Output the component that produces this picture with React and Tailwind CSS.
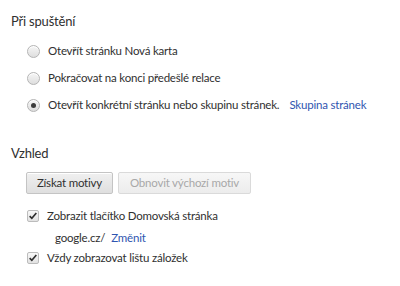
import { useState } from "react";

const font = { fontFamily: 'Lato, "Noto Sans", sans-serif' };

function Radio({ checked }) {
  return (
    <span className="relative inline-block h-[13px] w-[13px] shrink-0 rounded-full border border-[#b4b4b4] bg-gradient-to-b from-[#f6f6f6] to-[#dedede] shadow-[inset_0_1px_0_#fff]">
      {checked && (
        <span className="absolute left-[3px] top-[3px] h-[5px] w-[5px] rounded-full bg-[#3c3c3c]" />
      )}
    </span>
  );
}

function Checkbox() {
  return (
    <span className="flex h-[12px] w-[12px] shrink-0 items-center justify-center rounded-[2px] border border-[#bcbcbc] bg-gradient-to-b from-[#f8f8f8] to-[#e2e2e2]">
      <svg viewBox="0 0 12 12" className="h-[10px] w-[10px]">
        <path d="M2 6.2 L4.6 8.8 L10 2.4" fill="none" stroke="#2e2e2e" strokeWidth="2" />
      </svg>
    </span>
  );
}

export default function App() {
  const [startup] = useState(2);
  const options = [
    "Otevřít stránku Nová karta",
    "Pokračovat na konci předešlé relace",
    "Otevřít konkrétní stránku nebo skupinu stránek.",
  ];

  return (
    <div
      className="h-[286px] w-[400px] whitespace-nowrap bg-white text-[11.5px] tracking-[-0.2px] text-[#303030]"
      style={font}
    >
      <div className="pl-[11px] pt-[12px]">
        <h3 className="text-[13px] leading-[18px]">Při spuštění</h3>
        <div className="mt-[13px] flex flex-col gap-[11px] pl-[16px]">
          {options.map((label, i) => (
            <label key={label} className="flex h-[16px] items-center gap-[8px]">
              <Radio checked={startup === i} />
              <span>{label}</span>
              {i === 2 && <a className="ml-[2px] text-[#2f55b0]">Skupina stránek</a>}
            </label>
          ))}
        </div>

        <h3 className="mt-[31px] text-[13px] leading-[18px]">Vzhled</h3>
        <div className="mt-[10px] flex gap-[5px] pl-[15px]">
          <button className="h-[22px] w-[87px] rounded-[2px] border border-[#c4c4c4] bg-gradient-to-b from-[#f0f0f0] to-[#dfdfdf] text-[11.5px] text-[#303030] shadow-[inset_0_1px_0_#fff]">
            Získat motivy
          </button>
          <button
            disabled
            className="h-[22px] w-[133px] rounded-[2px] border border-[#dadada] bg-gradient-to-b from-[#f7f7f7] to-[#ececec] text-[11.5px] text-[#a8a8a8]"
          >
            Obnovit výchozí motiv
          </button>
        </div>

        <div className="mt-[11px] flex flex-col pl-[16px]">
          <label className="flex h-[22px] items-center gap-[8px]">
            <Checkbox />
            <span>Zobrazit tlačítko Domovská stránka</span>
          </label>
          <div className="flex h-[21px] items-center gap-[6px] pl-[28px]">
            <span>google.cz/</span>
            <a className="text-[#2f55b0]">Změnit</a>
          </div>
          <label className="flex h-[19px] items-center gap-[8px]">
            <Checkbox />
            <span>Vždy zobrazovat lištu záložek</span>
          </label>
        </div>
      </div>
    </div>
  );
}
